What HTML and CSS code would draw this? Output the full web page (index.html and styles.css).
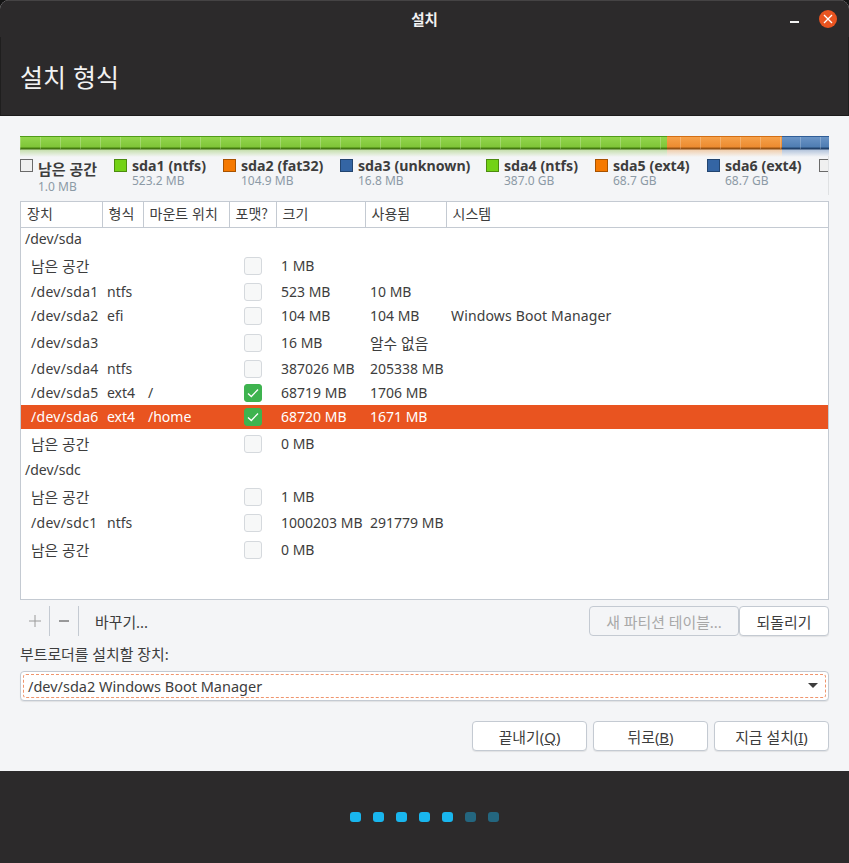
FILE: index.html
```html
<!DOCTYPE html>
<html lang="ko">
<head>
<meta charset="utf-8">
<title>설치</title>
<link rel="stylesheet" href="styles.css">
</head>
<body>
<div class="window">
  <header class="head">
    <div class="titlebar">
      <span class="win-title">설치</span>
      <span class="win-min"></span>
      <span class="win-close"><svg width="10" height="10" viewBox="0 0 10 10"><path d="M1 1l8 8M9 1l-8 8" stroke="#fff" stroke-width="1.3" fill="none"/></svg></span>
    </div>
    <h1 class="page-title">설치 형식</h1>
  </header>
  <main class="content">
    <div class="bar">
      <span class="seg seg-green"></span>
      <span class="seg seg-orange"></span>
      <span class="seg seg-blue"></span>
    </div>
    <div class="legend">
      <div class="lg lg-free"><i class="sq sq-free"></i><div><b>남은 공간</b><small>1.0 MB</small></div></div>
      <div class="lg"><i class="sq sq-green"></i><div><b>sda1 (ntfs)</b><small>523.2 MB</small></div></div>
      <div class="lg"><i class="sq sq-orange"></i><div><b>sda2 (fat32)</b><small>104.9 MB</small></div></div>
      <div class="lg"><i class="sq sq-blue"></i><div><b>sda3 (unknown)</b><small>16.8 MB</small></div></div>
      <div class="lg"><i class="sq sq-green"></i><div><b>sda4 (ntfs)</b><small>387.0 GB</small></div></div>
      <div class="lg"><i class="sq sq-orange"></i><div><b>sda5 (ext4)</b><small>68.7 GB</small></div></div>
      <div class="lg"><i class="sq sq-blue"></i><div><b>sda6 (ext4)</b><small>68.7 GB</small></div></div>
      <div class="lg"><i class="sq sq-free"></i></div>
    </div>
    <div class="list">
      <table class="parts">
        <colgroup><col class="c1"><col class="c2"><col class="c3"><col class="c4"><col class="c5"><col class="c6"><col></colgroup>
        <thead><tr><th>장치</th><th>형식</th><th>마운트 위치</th><th>포맷?</th><th>크기</th><th>사용됨</th><th>시스템</th></tr></thead>
        <tbody>
          <tr class="short"><td class="disk" colspan="7">/dev/sda</td></tr>
          <tr class="tall"><td class="dev ko">남은 공간</td><td></td><td></td><td><i class="cb"></i></td><td>1 MB</td><td></td><td></td></tr>
          <tr class="short"><td class="dev">/dev/sda1</td><td>ntfs</td><td></td><td><i class="cb"></i></td><td>523 MB</td><td>10 MB</td><td></td></tr>
          <tr class="short"><td class="dev">/dev/sda2</td><td>efi</td><td></td><td><i class="cb"></i></td><td>104 MB</td><td>104 MB</td><td class="sys">Windows Boot Manager</td></tr>
          <tr class="tall"><td class="dev">/dev/sda3</td><td></td><td></td><td><i class="cb"></i></td><td>16 MB</td><td class="ko">알수 없음</td><td></td></tr>
          <tr class="short"><td class="dev">/dev/sda4</td><td>ntfs</td><td></td><td><i class="cb"></i></td><td>387026 MB</td><td>205338 MB</td><td></td></tr>
          <tr class="short"><td class="dev">/dev/sda5</td><td>ext4</td><td>/</td><td><i class="cb on"><svg width="14" height="14" viewBox="0 0 14 14"><path d="M2 7.5l3.3 3L12 3.5" stroke="#fff" stroke-width="1.3" fill="none"/></svg></i></td><td>68719 MB</td><td>1706 MB</td><td></td></tr>
          <tr class="short sel"><td class="dev">/dev/sda6</td><td>ext4</td><td>/home</td><td><i class="cb on"><svg width="14" height="14" viewBox="0 0 14 14"><path d="M2 7.5l3.3 3L12 3.5" stroke="#fff" stroke-width="1.3" fill="none"/></svg></i></td><td>68720 MB</td><td>1671 MB</td><td></td></tr>
          <tr class="tall"><td class="dev ko">남은 공간</td><td></td><td></td><td><i class="cb"></i></td><td>0 MB</td><td></td><td></td></tr>
          <tr class="short"><td class="disk" colspan="7">/dev/sdc</td></tr>
          <tr class="tall"><td class="dev ko">남은 공간</td><td></td><td></td><td><i class="cb"></i></td><td>1 MB</td><td></td><td></td></tr>
          <tr class="short"><td class="dev">/dev/sdc1</td><td>ntfs</td><td></td><td><i class="cb"></i></td><td>1000203 MB</td><td>291779 MB</td><td></td></tr>
          <tr class="tall"><td class="dev ko">남은 공간</td><td></td><td></td><td><i class="cb"></i></td><td>0 MB</td><td></td><td></td></tr>
        </tbody>
      </table>
    </div>
    <div class="tools">
      <span class="tool tool-add"><svg width="12" height="12" viewBox="0 0 12 12"><path d="M6 0v12M0 6h12" stroke="#9a9a9a" stroke-width="1" fill="none"/></svg></span>
      <span class="tool"><svg width="12" height="12" viewBox="0 0 12 12"><path d="M1 6h10" stroke="#3d3d3d" stroke-width="1" fill="none"/></svg></span>
      <span class="tool-text">바꾸기...</span>
      <span class="spring"></span>
      <button class="btn btn-off btn-new">새 파티션 테이블...</button>
      <button class="btn btn-revert">되돌리기</button>
    </div>
    <div class="boot-label">부트로더를 설치할 장치:</div>
    <div class="combo">
      <div class="combo-in"><span>/dev/sda2 Windows Boot Manager</span><i class="caret"></i></div>
    </div>
    <div class="actions">
      <button class="btn btn-act">끝내기(<u>Q</u>)</button>
      <button class="btn btn-act">뒤로(<u>B</u>)</button>
      <button class="btn btn-act">지금 설치(<u>I</u>)</button>
    </div>
  </main>
  <footer class="foot">
    <i class="dot"></i><i class="dot"></i><i class="dot"></i><i class="dot"></i><i class="dot"></i><i class="dot dim"></i><i class="dot dim"></i>
  </footer>
</div>
</body>
</html>
```
FILE: styles.css
```css
* { box-sizing: border-box; }
html, body { margin: 0; height: 100%; background: #141414; }
body {
  font-family: "Noto Sans", "Noto Sans CJK KR", sans-serif;
  font-size: 14px;
  color: #3d3d3d;
}
.window {
  width: 849px;
  height: 863px;
  display: flex;
  flex-direction: column;
  background: #f4f5f7;
  overflow: hidden;
  border-radius: 9px 9px 0 0;
}
.head {
  height: 116px;
  background: #2c2a2b;
  border-top: 1px solid #454344;
  border-bottom: 1px solid #1c1b1b;
  color: #fff;
  flex: none;
}
.titlebar {
  height: 36px;
  padding-bottom: 2px;
  display: flex;
  align-items: center;
  justify-content: center;
  position: relative;
}
.win-title { font-weight: 700; font-size: 14.5px; color: #f2f2f2; }
.win-min {
  position: absolute;
  left: 790px;
  top: 20px;
  width: 9px;
  height: 2px;
  background: #f2f2f2;
}
.win-close {
  position: absolute;
  left: 819px;
  top: 9px;
  width: 18px;
  height: 18px;
  border-radius: 50%;
  background: #e95420;
  display: flex;
  align-items: center;
  justify-content: center;
}
.page-title {
  margin: 0;
  padding: 20px 0 0 20px;
  height: 78px;
  font-family: "Noto Sans CJK KR", sans-serif;
  font-size: 25px;
  line-height: 38px;
  font-weight: 400;
  color: #f2f2f2;
  box-shadow: inset 1px 0 0 #1f1e1e, inset -1px 0 0 #1f1e1e;
}
.content {
  flex: 1;
  padding: 20px 20px 0;
  display: flex;
  flex-direction: column;
  min-height: 0;
}
.bar {
  height: 22px;
  display: flex;
  flex: none;
  position: relative;
}
.bar::after {
  content: "";
  position: absolute;
  left: 0;
  top: 1px;
  right: 0;
  height: 12px;
  background: linear-gradient(90deg, rgba(255,255,255,.22) 1px, transparent 1px) 0 0 / 20px 100%;
}
.seg { display: block; height: 100%; }
.seg-green {
  width: 647px;
  background: linear-gradient(#4f9c18 0 1px, #93d64d 1px, #7fc538 11px, #47810f 12px, #3f7010 13px, #c6dfae 14px, #f4f5f7 21px);
}
.seg-orange {
  width: 115px;
  background: linear-gradient(#d36e14 0 1px, #f6a14a 1px, #ec8b30 11px, #9c5514 12px, #8c4c12 13px, #f0cfae 14px, #f4f5f7 21px);
}
.seg-blue {
  width: 47px;
  background: linear-gradient(#2f5d96 0 1px, #6a94c6 1px, #4f7db2 11px, #234670 12px, #1f3d66 13px, #b4c5dc 14px, #f4f5f7 21px);
}
.legend {
  height: 39px;
  margin-top: -2px;
  margin-bottom: 6px;
  display: grid;
  grid-template-columns: 94px 109px 117px 146px 109px 112px 112px 10px;
  overflow: hidden;
  flex: none;
  border-right: 1px solid #dfe1e3;
  position: relative;
}
.lg { display: flex; gap: 5px; align-items: flex-start; min-width: 0; white-space: nowrap; }
.lg b { display: block; font-size: 14.2px; line-height: 19px; margin-bottom: -2px; font-weight: 700; color: #3d3d3d; }
.lg small { display: block; font-size: 12px; line-height: 16px; color: #8c9aa6; }
.lg-free b { font-size: 15px; margin-top: 4px; margin-bottom: 0; }
.sq {
  display: block;
  width: 13px;
  height: 13px;
  flex: none;
  margin-top: 3px;
  border: 1px solid #555;
}
.sq-free { background: #f0f0f0; border-color: #6a6a6a; }
.sq-green { background: #73d216; border-color: #4c8c0f; }
.sq-orange { background: #f57900; border-color: #a85300; }
.sq-blue { background: #3465a4; border-color: #234570; }
.list {
  height: 399px;
  background: #fff;
  border: 1px solid #c4cad2;
  flex: none;
  overflow: hidden;
}
.parts { width: 100%; border-collapse: collapse; table-layout: fixed; }
.c1 { width: 81px; }
.c2 { width: 41px; }
.c3 { width: 86px; }
.c4 { width: 47px; }
.c5 { width: 89px; }
.c6 { width: 81px; }
.parts th {
  height: 25px;
  padding: 0 6px 2px;
  text-align: left;
  font-size: 14px;
  font-weight: 400;
  white-space: nowrap;
  border-right: 1px solid #c4cad2;
  border-bottom: 1px solid #c4cad2;
  font-family: "Noto Sans CJK KR", sans-serif;
}
.parts th:last-child { border-right: 0; }
.parts td {
  padding: 0 0 0 5px;
  white-space: nowrap;
  overflow: visible;
}
.short td { height: 24px; padding-bottom: 2px; }
.short td:nth-child(4) { padding-bottom: 0; }
.tall td { height: 29px; }
.parts td.disk { padding-left: 4px; }
.parts td.dev { padding-left: 10px; letter-spacing: .3px; }
.parts td.ko { font-size: 14.8px; letter-spacing: 0; }
.parts td.sys { letter-spacing: .15px; }
.sel td { background: #e95420; color: #fff; }
.cb {
  display: flex;
  align-items: center;
  justify-content: center;
  width: 18px;
  height: 18px;
  margin-left: 10px;
  border: 1px solid #d5d9dd;
  border-radius: 3px;
  background: #f7f8f8;
}
.cb.on { background: #3eb34f; border-color: #3eb34f; }
.tools {
  height: 30px;
  margin-top: 6px;
  display: flex;
  align-items: center;
  flex: none;
}
.tool {
  width: 29px;
  height: 30px;
  display: flex;
  align-items: center;
  justify-content: center;
  border-right: 1px solid #c4cad2;
}
.tool-add { width: 30px; }
.tool-text { padding-left: 16px; font-size: 14.9px; }
.spring { flex: 1; }
.btn {
  font: inherit;
  font-size: 14.9px;
  color: #3d3d3d;
  height: 30px;
  padding: 0;
  background: #fff;
  border: 1px solid #c4cad2;
  border-radius: 4px;
  box-shadow: 0 1px 1px rgba(0,0,0,.08);
}
.btn-off { background: #f4f5f7; color: #a8a8a8; box-shadow: none; }
.btn-new { width: 150px; }
.btn-revert { width: 90px; }
.boot-label { margin-top: 8px; height: 20px; line-height: 20px; font-size: 14.9px; flex: none; }
.combo {
  margin-top: 7px;
  height: 30px;
  padding: 2px;
  background: #fff;
  border: 1px solid #c4cad2;
  border-radius: 4px;
  box-shadow: 0 1px 1px rgba(0,0,0,.08);
  flex: none;
  font-size: 14.5px;
}
.combo-in {
  height: 100%;
  display: flex;
  align-items: center;
  justify-content: space-between;
  padding: 0 7px 1px 4px;
  border: 1px dashed #f0956d;
  border-radius: 3px;
}
.caret {
  width: 0;
  height: 0;
  border-left: 5px solid transparent;
  border-right: 5px solid transparent;
  border-top: 5px solid #3d3d3d;
}
.actions {
  margin-top: 20px;
  display: flex;
  justify-content: flex-end;
  gap: 6px;
  flex: none;
}
.btn-act { width: 115px; }
.foot {
  height: 92px;
  flex: none;
  background: #2c2a2b;
  display: flex;
  align-items: center;
  justify-content: center;
  gap: 12px;
}
.dot {
  width: 11px;
  height: 10px;
  border-radius: 3px;
  background: #19b6ee;
}
.dot.dim { background: #24667f; }
```
